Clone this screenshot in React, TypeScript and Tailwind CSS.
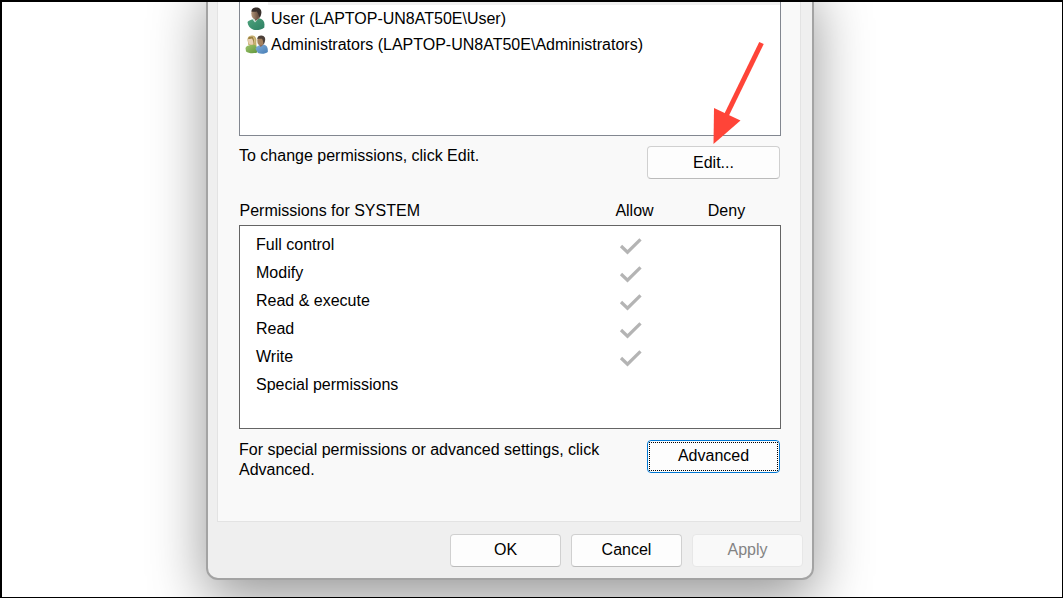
import type { ButtonHTMLAttributes } from 'react';
import { clsx } from 'clsx';

function UserIcon() {
  return (
    <svg className="h-6 w-6 shrink-0" viewBox="0 0 24 24" aria-hidden="true">
      <defs>
        <linearGradient id="userBody" x1="0" y1="0" x2="1" y2="1">
          <stop offset="0" stopColor="#4fa37c" />
          <stop offset="1" stopColor="#2c7f62" />
        </linearGradient>
        <linearGradient id="userFace" x1="0" y1="0" x2="1" y2="0">
          <stop offset="0" stopColor="#b3977a" />
          <stop offset="1" stopColor="#5f4738" />
        </linearGradient>
      </defs>
      <path d="M3.500 15C4.500 13.500 7 12.800 10 12L15 11.300C18.500 11.800 20.300 14 20.500 17.500L20.300 20.500C17.500 22.800 13 23.600 9.500 22.800C6 21.500 3.700 18.500 3.500 15Z" fill="url(#userBody)" />
      <path d="M8.500 12.500L11 15.500L14.500 11.500L13.500 9.500H10Z" fill="#cfe3dc" />
      <path d="M10 10.500L11.500 14L15.500 11L15 7Z" fill="#76594a" />
      <ellipse cx="11.200" cy="6.600" rx="3.900" ry="5.600" fill="url(#userFace)" />
      <path d="M7.300 4.500C7.600 1.500 9.600 0.500 12.300 0.500C15.800 0.500 18 3 17.300 6.500C17 8.800 16.300 10.200 15.300 10.800C15 8.500 14.200 6.500 12.800 4.600C11.200 5 8.800 4.800 7.300 4.500Z" fill="#382f2b" />
    </svg>
  );
}

function GroupIcon() {
  return (
    <svg className="h-6 w-6 shrink-0" viewBox="0 0 24 24" aria-hidden="true">
      <defs>
        <linearGradient id="groupGreen" x1="0" y1="0" x2="1" y2="1">
          <stop offset="0" stopColor="#a0c46c" />
          <stop offset="1" stopColor="#5f963c" />
        </linearGradient>
        <linearGradient id="groupBlue" x1="0" y1="0" x2="1" y2="1">
          <stop offset="0" stopColor="#82aedb" />
          <stop offset="1" stopColor="#477eb5" />
        </linearGradient>
      </defs>
      <path d="M3.500 6C4 2.800 6.500 2.300 8.500 2.500C11.500 2.800 13 5.500 12.300 9L12.500 13H7L4 11.500C4.600 9.500 3.200 8 3.500 6Z" fill="#c4ae68" />
      <ellipse cx="7.300" cy="7.500" rx="3.200" ry="4.200" fill="#ead0b4" />
      <path d="M4 6C4.500 3.800 6.500 3.200 9 3.800C10.500 6.500 10.300 10 9.500 12C9.700 9 9 7 8 5.500C6.800 6.200 5.200 5.800 4 6Z" fill="#9b8240" />
      <path d="M1.500 15C2 13.500 3.500 12.300 6.500 12L11 12C13 13 13.500 15 13.200 19.500C9.500 20.700 4.500 20.500 2 18.500Z" fill="url(#groupGreen)" />
      <path d="M11.500 16C12 14 13.500 12.500 17 11.700L20.500 11.700C23 12.700 24 14.700 23.800 19C21.500 21 17 21.300 14 20Z" fill="url(#groupBlue)" />
      <path d="M15 11.800L16.700 14L19.500 11.500L18.500 9H15.500Z" fill="#8b6954" />
      <ellipse cx="16.600" cy="7.700" rx="3.300" ry="4.600" fill="#a3815f" />
      <path d="M13.300 6C13.300 3.500 15.200 2.400 17.400 2.500C20.600 2.700 21.900 5.300 20.900 8.500C20.600 10 19.900 11.100 19.200 11.500C19.400 9 18.900 7 17.900 5.700C16.400 6 14.400 5.500 13.300 6Z" fill="#4c4039" />
    </svg>
  );
}

function CheckIcon() {
  return (
    <svg className="mr-2 inline-block h-5 w-6" viewBox="0 0 24 20" role="img" aria-label="Allowed">
      <path d="M2 10L8.500 16.200L21.500 3.300" fill="none" stroke="#b4b4b4" strokeWidth="3.200" />
    </svg>
  );
}

function ArrowMark() {
  return (
    <svg className="pointer-events-none absolute right-3 -bottom-2 h-[104px] w-14" viewBox="0 0 56 104" aria-hidden="true">
      <path d="M48.500 3L13 76" stroke="#ff4438" strokeWidth="5" />
      <path d="M1 68L27.500 80.500L0.500 104Z" fill="#ff4438" />
    </svg>
  );
}

function DialogButton({ className, ...props }: ButtonHTMLAttributes<HTMLButtonElement>) {
  return (
    <button
      type="button"
      className={clsx(
        'h-[33px] rounded border border-[#d0d0d0] border-b-[#bbbbbb] bg-[#fdfdfd] leading-5',
        'disabled:border-[#e7e7e7] disabled:bg-[#f9f9f9] disabled:text-[#838383]',
        className,
      )}
      {...props}
    />
  );
}

const permissions = [
  { name: 'Full control', allow: true },
  { name: 'Modify', allow: true },
  { name: 'Read & execute', allow: true },
  { name: 'Read', allow: true },
  { name: 'Write', allow: true },
  { name: 'Special permissions', allow: false },
];

export default function App() {
  return (
    <main className="flex min-h-screen justify-center overflow-hidden border-t-2 border-r border-b border-l-2 border-black bg-white pr-11 pb-4 font-['Liberation_Sans',Arial,sans-serif] text-base leading-5 text-black">
      <section
        aria-label="Security"
        className="-mt-6 w-full max-w-[608px] self-start rounded-[12px] border-2 border-[#a3a3a3] bg-[#efefef] pt-[22px] pr-[11px] pb-[11px] pl-[9px] shadow-[0_18px_56px_rgba(0,0,0,0.42)]"
      >
        <div className="border border-t-0 border-[#e3e3e3] bg-[#f9f9f9] pr-[19px] pb-[41px] pl-[21px]">
          <div className="relative">
            <div className="h-[134px] border border-t-0 border-[#828790] bg-white">
              <div className="ml-7 h-[3px] bg-[#f0f0f0]" />
              <ul className="pt-px pl-1">
                <li className="flex h-[26px] items-center gap-[3px]">
                  <UserIcon />
                  User (LAPTOP-UN8AT50E\User)
                </li>
                <li className="flex h-[26px] items-center gap-[3px]">
                  <GroupIcon />
                  Administrators (LAPTOP-UN8AT50E\Administrators)
                </li>
              </ul>
            </div>
            <ArrowMark />
          </div>

          <div className="flex items-start justify-between pt-[10px] pr-px">
            <p>To change permissions, click Edit.</p>
            <DialogButton className="w-[133px]">Edit...</DialogButton>
          </div>

          <table className="mt-[22px] w-full table-fixed">
            <colgroup>
              <col />
              <col className="w-[92px]" />
              <col className="w-[100px]" />
            </colgroup>
            <thead>
              <tr className="h-6 align-top">
                <th className="text-left font-normal">Permissions for SYSTEM</th>
                <th className="font-normal">Allow</th>
                <th className="pr-2 font-normal">Deny</th>
              </tr>
            </thead>
            <tbody className="border border-[#646464] bg-white">
              <tr className="h-[5px]"><td colSpan={3} /></tr>
              {permissions.map(({ name, allow }) => (
                <tr key={name} className="h-7">
                  <th scope="row" className="pt-px pl-4 text-left font-normal">{name}</th>
                  <td className="pt-1 text-center leading-none">{allow && <CheckIcon />}</td>
                  <td />
                </tr>
              ))}
              <tr className="h-[30px]"><td colSpan={3} /></tr>
            </tbody>
          </table>

          <div className="flex items-start justify-between pt-[11px] pr-px">
            <p className="max-w-[370px]">For special permissions or advanced settings, click Advanced.</p>
            <button
              type="button"
              className="h-[33px] w-[133px] rounded border border-[#0078d4] bg-[#fdfdfd] p-px"
            >
              <span className="flex h-full items-center justify-center border border-dotted border-black">Advanced</span>
            </button>
          </div>
        </div>

        <div className="-mr-0.5 flex justify-end gap-[10px] pt-3">
          <DialogButton className="w-[111px]">OK</DialogButton>
          <DialogButton className="w-[111px]">Cancel</DialogButton>
          <DialogButton className="w-[111px]" disabled>Apply</DialogButton>
        </div>
      </section>
    </main>
  );
}
